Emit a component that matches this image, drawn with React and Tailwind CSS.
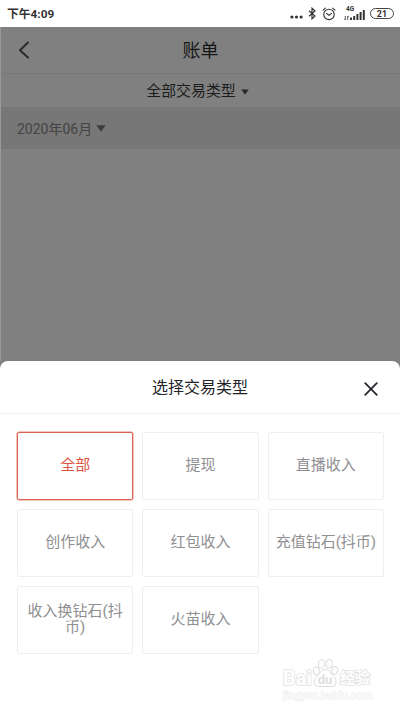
import React, { useState } from 'react';

const TYPES = ['全部', '提现', '直播收入', '创作收入', '红包收入', '充值钻石(抖币)', '收入换钻石(抖币)', '火苗收入'];

const StatusBar = () => (
  <div className="h-[27px] bg-white flex items-center justify-between pl-[7px] pr-[6px] text-[#333]">
    <span className="text-[11.8px] leading-[16px] font-bold pt-px">下午4:09</span>
    <div className="flex items-center">
      <svg className="w-[13px] h-[4px] mt-[7px]" viewBox="0 0 13 4" fill="currentColor">
        <circle cx="1.9" cy="2" r="1.6" />
        <circle cx="6.5" cy="2" r="1.6" />
        <circle cx="11.1" cy="2" r="1.6" />
      </svg>
      <svg className="w-[8px] h-[13px] ml-[5px]" viewBox="0 0 8 13" fill="none" stroke="currentColor" strokeWidth="1.2">
        <path d="M1 3.7 7 9 4 11.8V1.2L7 4 1 9.3" />
      </svg>
      <svg className="w-[14px] h-[14px] ml-[6px]" viewBox="0 0 14 14" fill="none" stroke="currentColor" strokeWidth="1.1" strokeLinecap="round">
        <circle cx="7" cy="7.4" r="5.2" />
        <path d="M4.6 6.5 7 8.4 9.4 6.5M1 3.2 3.4 1.2M13 3.2 10.6 1.2" />
      </svg>
      <div className="flex flex-col w-[8px] h-[15px] ml-[8px]">
        <span className="text-[6.5px] leading-[7px] font-bold pl-[2px]">4G</span>
        <svg className="w-[5px] h-[4px] mt-[3px]" viewBox="0 0 5 4" stroke="currentColor" strokeWidth="0.8" fill="none">
          <path d="M1.3 0v4M0.3 2.8 1.3 4M3.7 4V0M4.7 1.2 3.7 0" />
        </svg>
      </div>
      <svg className="w-[15px] h-[10px] mt-[2px] -ml-[2px]" viewBox="0 0 15 10" fill="currentColor">
        <rect x="0" y="7.5" width="2" height="2.5" rx="0.5" />
        <rect x="3.2" y="6" width="2" height="4" rx="0.5" />
        <rect x="6.4" y="4" width="2" height="6" rx="0.5" />
        <rect x="9.6" y="2" width="2" height="8" rx="0.5" />
        <rect x="12.8" y="0" width="2" height="10" rx="0.5" />
      </svg>
      <span className="w-[24px] h-[11px] ml-[5px] rounded-full border border-[#444] flex items-center justify-center text-[9px] leading-[9px] font-bold pt-px">
        21
      </span>
    </div>
  </div>
);

const Watermark = () => (
  <div className="absolute left-[283px] bottom-[9px] w-[94px] font-bold text-white [paint-order:stroke_fill] [-webkit-text-stroke:1.6px_#e2e2e2]">
    <div className="flex items-end h-[32px]">
      <span className="w-[29px] text-[20px] leading-[24px]">Bai</span>
      <svg className="w-[27px] h-[30px] mb-[2px] [paint-order:normal]" viewBox="0 0 27 30" fill="#fff" stroke="#dcdcdc" strokeWidth="1">
        <ellipse cx="4.3" cy="13" rx="3" ry="4" transform="rotate(-15 4.3 13)" />
        <ellipse cx="9.4" cy="6" rx="3" ry="4.3" />
        <ellipse cx="17.2" cy="5.8" rx="3" ry="4.3" transform="rotate(8 17.2 5.8)" />
        <ellipse cx="22.8" cy="12.4" rx="3" ry="4" transform="rotate(15 22.8 12.4)" />
        <path d="M13.5 11.5c4 0 5 4 8 6.500s4 10.500-1.500 10.500H6.500c-5.500 0-5-8-1.500-10.500s4.500-6.500 8.500-6.500z" />
        <text x="13" y="26" textAnchor="middle" fontSize="13" fill="#dedede" stroke="none">du</text>
      </svg>
      <span className="text-[15px] leading-[23px] ml-px whitespace-nowrap">经验</span>
    </div>
    <div className="text-[11px] leading-[12px] whitespace-nowrap font-normal [-webkit-text-stroke:0.9px_#e8e8e8]">jingyan.baidu.com</div>
  </div>
);

const TypeCard = ({ label, active, onClick }) => (
  <button
    onClick={onClick}
    className={`rounded-[2px] px-[6px] pb-[2px] flex items-center justify-center text-center text-[15px] leading-[16px] ${
      active
        ? 'border border-[#dc6553] text-[#d95442] shadow-[0_0_0_0.5px_#e88a7c]'
        : 'border border-[#efefef] text-[#8f8f92]'
    }`}
  >
    {label}
  </button>
);

export default function App() {
  const [selected, setSelected] = useState('全部');

  return (
    <div className="relative w-[400px] h-[711px] bg-[#808080] overflow-hidden flex flex-col font-[Roboto,'Noto_Sans_CJK_SC',sans-serif]">
      <StatusBar />

      {/* Dimmed bill page */}
      <div className="flex-1 border-l border-[#999]">
        <header className="h-[47px] border-b border-[#797979] grid grid-cols-3 items-center">
          <svg className="w-[12px] h-[18px] ml-[17px]" viewBox="0 0 12 18" fill="none" stroke="#2b2b2b" strokeWidth="2" strokeLinecap="round" strokeLinejoin="round">
            <path d="M10 1.500 2 9.200 10 16.500" />
          </svg>
          <h1 className="text-center text-[18px] leading-[24px] pt-[2px] text-[#161616]">账单</h1>
        </header>
        <div className="h-[33px] flex items-center justify-center gap-[5px] pr-[6px] text-[14.9px] text-[#1c1c1c]">
          <span className="leading-[20px]">全部交易类型</span>
          <svg className="w-[8px] h-[6px] mt-[3px]" viewBox="0 0 8 6" fill="#282828">
            <path d="M0.300 0.500h7.400L4 5.700z" />
          </svg>
        </div>
        <div className="h-[42px] bg-[#777] flex items-center gap-[4px] pl-[16px] text-[14px] text-[#444]">
          <span className="leading-[20px] pt-px">2020年06月</span>
          <svg className="w-[10px] h-[7px]" viewBox="0 0 10 7" fill="#3c3c3c">
            <path d="M0.300 0.300h9.400L5 6.700z" />
          </svg>
        </div>
      </div>

      {/* Bottom sheet */}
      <section className="h-[350px] bg-white rounded-t-[8px]">
        <div className="h-[53px] border-b border-[#f3f3f3] grid grid-cols-[40px_1fr_40px] items-center">
          <h2 className="col-start-2 text-center text-[16px] leading-[22px] pt-[2px] text-[#222228]">选择交易类型</h2>
          <svg className="w-[14px] h-[14px] ml-[4px] mt-[3px]" viewBox="0 0 14 14" fill="none" stroke="#222228" strokeWidth="1.700" strokeLinecap="round">
            <path d="M1.200 1.200 12.800 12.800M12.800 1.200 1.200 12.800" />
          </svg>
        </div>
        <div className="grid grid-cols-3 auto-rows-[68px] gap-x-[9px] gap-y-[9px] pl-[17px] pr-[16px] pt-[18px]">
          {TYPES.map((type) => (
            <TypeCard key={type} label={type} active={type === selected} onClick={() => setSelected(type)} />
          ))}
        </div>
      </section>

      <Watermark />
    </div>
  );
}
